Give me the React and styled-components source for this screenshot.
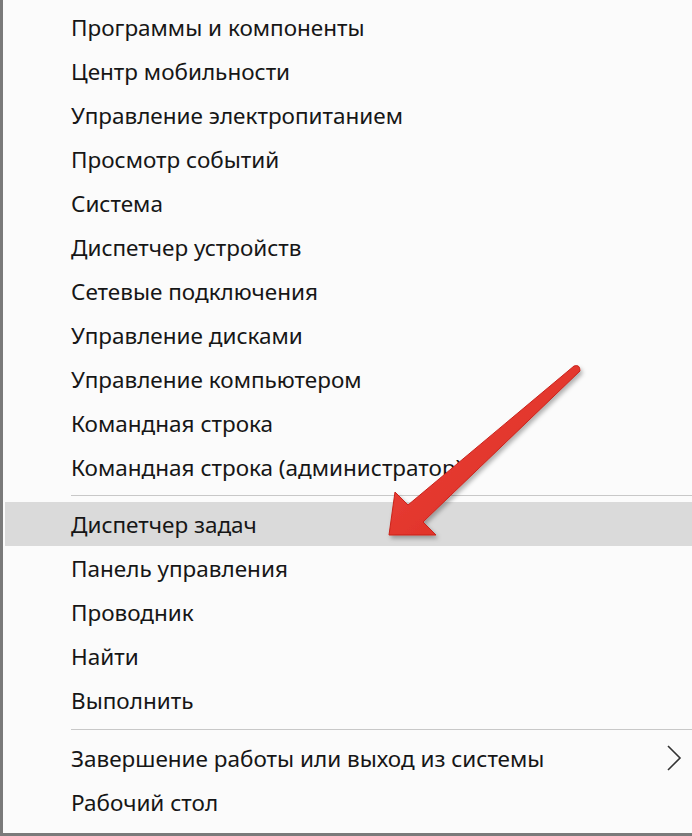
import React from 'react';
import styled, {createGlobalStyle} from 'styled-components';

const Global = createGlobalStyle`
  html, body { margin: 0; padding: 0; background: #fbfbfb; }
  body { font-family: 'Noto Sans', 'Open Sans', sans-serif; }
`;

const Menu = styled.div`
  position: relative;
  width: 692px;
  height: 836px;
  box-sizing: border-box;
  background: #fbfbfb;
  border-left: 3px solid #7a7a7a;
  border-bottom: 3px solid #7a7a7a;
  padding-top: 5px;
  overflow: hidden;
`;

const Item = styled.div`
  display: flex;
  align-items: center;
  justify-content: space-between;
  height: 44px;
  margin-left: 2px;
  padding-left: 66px;
  padding-right: 10px;
  font-size: 22.5px;
  color: #161616;
  background: ${p => (p.$active ? '#dadada' : 'transparent')};
  white-space: nowrap;
`;

const Separator = styled.div`
  height: ${p => p.$h || 13}px;
  display: flex;
  align-items: center;
  padding-left: 68px;
  &::after {
    content: '';
    flex: 1;
    height: 1px;
    background: #c8c8c8;
  }
`;

const Arrow = styled.svg`
  position: absolute;
  left: 0;
  top: 0;
  pointer-events: none;
`;

const top = [
  'Программы и компоненты',
  'Центр мобильности',
  'Управление электропитанием',
  'Просмотр событий',
  'Система',
  'Диспетчер устройств',
  'Сетевые подключения',
  'Управление дисками',
  'Управление компьютером',
  'Командная строка',
  'Командная строка (администратор)',
];

const middle = ['Диспетчер задач', 'Панель управления', 'Проводник', 'Найти', 'Выполнить'];

function Chevron() {
  return (
    <svg width="16" height="26" viewBox="0 0 16 26">
      <path d="M2 1 L14 13 L2 25" fill="none" stroke="#333" strokeWidth="1.6" />
    </svg>
  );
}

export default function App() {
  return (
    <>
      <Global />
      <Menu>
        {top.map(t => <Item key={t}>{t}</Item>)}
        <Separator $h={13} />
        {middle.map((t, i) => <Item key={t} $active={i === 0}>{t}</Item>)}
        <Separator $h={14} />
        <Item>
          Завершение работы или выход из системы
          <Chevron />
        </Item>
        <Item>Рабочий стол</Item>
        <Arrow width="692" height="836" viewBox="0 0 692 836">
          <defs>
            <linearGradient id="red" x1="0" y1="0" x2="1" y2="1">
              <stop offset="0" stopColor="#ef4a3f" />
              <stop offset="1" stopColor="#d8261e" />
            </linearGradient>
            <filter id="sh" x="-20%" y="-20%" width="140%" height="140%">
              <feDropShadow dx="2" dy="3" stdDeviation="2" floodColor="#000" floodOpacity="0.3" />
            </filter>
          </defs>
          <path
            d="M386 535 L392 492 L405 505 L571 366 Q577 364 577 371 L420 522 L433 535 Z"
            fill="url(#red)"
            stroke="#c9231b"
            strokeWidth="1"
            strokeLinejoin="round"
            filter="url(#sh)"
          />
        </Arrow>
      </Menu>
    </>
  );
}
